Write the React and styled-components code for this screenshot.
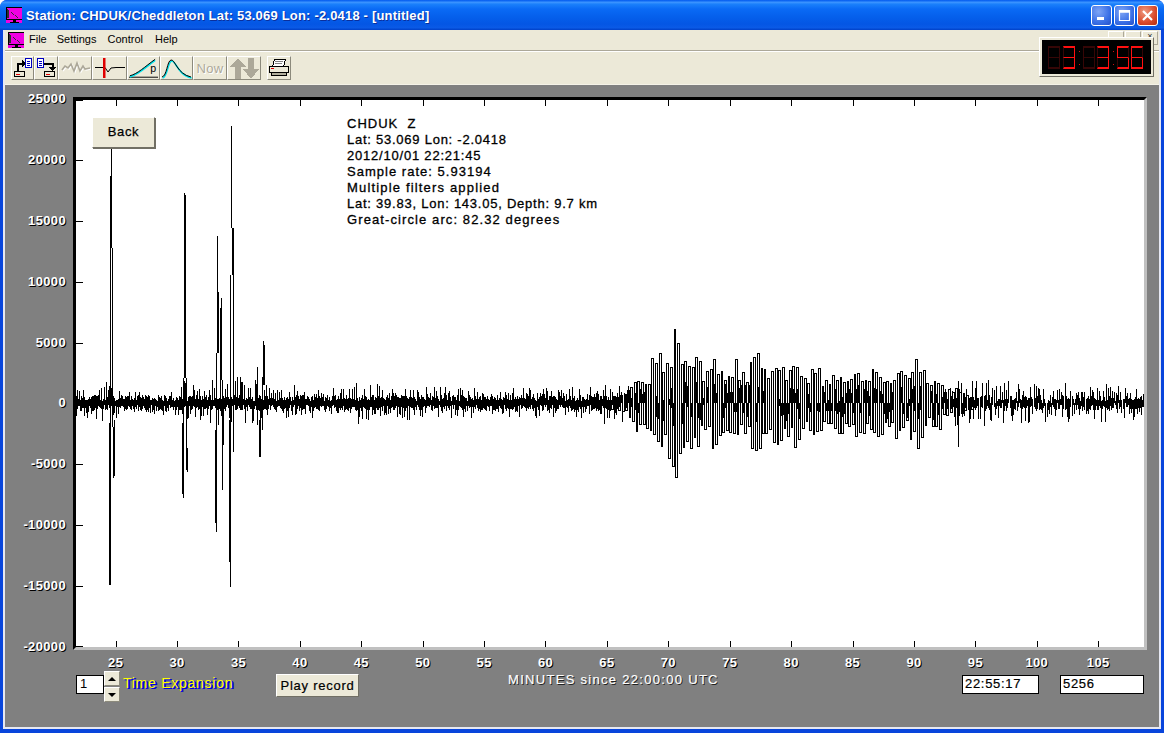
import React from "react";
import styled, { createGlobalStyle } from "styled-components";

const GlobalStyle = createGlobalStyle`
  html, body {
    margin: 0;
    padding: 0;
    background: #fff;
    overflow: hidden;
  }
  * { box-sizing: border-box; }
`;

const Win = styled.div`
  width: 1164px;
  height: 733px;
  display: flex;
  flex-direction: column;
  padding: 0 3px 4px;
  border-radius: 7px 7px 0 0;
  background: #0845dc;
  font-family: "Liberation Sans", Arial, sans-serif;
  position: relative;
`;

const TitleBar = styled.div`
  height: 30px;
  margin: 0 -3px;
  padding: 0 6px 0 6px;
  display: flex;
  align-items: center;
  gap: 4px;
  border-radius: 7px 7px 0 0;
  background: linear-gradient(
    180deg,
    #0058ee 0%,
    #3a93ff 8%,
    #1a80fb 14%,
    #0a6af5 30%,
    #0560ec 55%,
    #0456e4 80%,
    #0a5ae6 92%,
    #0040c8 100%
  );
`;

const TitleText = styled.div`
  flex: 1;
  color: #fff;
  font-size: 13px;
  font-weight: 700;
  letter-spacing: 0.19px;
  text-shadow: 1px 1px 0 #0b2f9c;
  white-space: nowrap;
`;

const WinBtn = styled.div`
  width: 21px;
  height: 21px;
  margin-left: ${(p) => p.$gap || 0}px;
  border: 1px solid #fff;
  border-radius: 3px;
  display: flex;
  align-items: center;
  justify-content: center;
  background: ${(p) =>
    p.$close
      ? "radial-gradient(circle at 35% 30%, #ee9a80, #d9492a 60%, #b52d10)"
      : "radial-gradient(circle at 35% 30%, #7fa5f5, #3a6fe6 60%, #2350c8)"};
`;

const Frame = styled.div`
  flex: 1;
  min-height: 0;
  display: flex;
  flex-direction: column;
  border: solid #e6e8f2;
  border-width: 0 2px 2px 2px;
`;

const MenuBar = styled.div`
  height: 20px;
  display: flex;
  align-items: center;
  padding-left: 3px;
  background: #ece9d8;
`;

const MenuItem = styled.span`
  font-size: 11px;
  line-height: 13px;
  padding-bottom: 2px;
  color: #000;
  margin-left: ${(p) => p.$gap}px;
`;

const MdiGroup = styled.div`
  margin-left: auto;
  margin-right: 1px;
  align-self: flex-start;
  margin-top: 1px;
  display: flex;
  gap: 1px;
`;

const MdiBtn = styled.div`
  width: 16px;
  height: 14px;
  background: #ece9d8;
  border: 1px solid;
  border-color: #fff #aca899 #aca899 #fff;
  font-size: 9px;
  line-height: 9px;
  text-align: center;
  color: #333;
  overflow: hidden;
`;

const Toolbar = styled.div`
  height: 34px;
  display: flex;
  align-items: flex-start;
  padding: 5px 0 0 6px;
  background: #ece9d8;
  border-top: 1px solid #aca899;
  box-shadow: inset 0 1px 0 #fff;
`;

const ToolBtn = styled.div`
  width: ${(p) => p.$w}px;
  height: 24px;
  margin-left: ${(p) => p.$gap || 0}px;
  display: flex;
  align-items: center;
  justify-content: center;
  background: #ece9d8;
  border: 1px solid;
  border-color: #fff #8c8a7c #8c8a7c #fff;
`;

const NowText = styled.span`
  font-size: 13px;
  letter-spacing: 0.3px;
  color: #aca899;
  text-shadow: 1px 1px 0 #fff;
`;

const ClockBox = styled.div`
  position: absolute;
  left: 1039px;
  top: 37px;
  width: 115px;
  height: 40px;
  padding: 2px;
  display: flex;
  background: #ece9d8;
  border: 1px solid;
  border-color: #fff #716f64 #716f64 #fff;
`;

const ClockFace = styled.div`
  flex: 1;
  padding: 6px 0 0 6px;
  display: flex;
  align-items: flex-start;
  background: #000;
`;

const SegDigit = styled.div`
  width: 12px;
  height: 23px;
  margin-right: ${(p) => p.$mr}px;
  display: flex;
  flex-direction: column;
`;

const SegCell = styled.div`
  flex: 1;
  border-style: solid;
  border-width: ${(p) => (p.$lower ? "0 1px 2px 1px" : "2px 1px 1px 1px")};
  border-top-color: ${(p) => (p.$t ? "#ff1010" : "#350606")};
  border-left-color: ${(p) => (p.$l ? "#ff1010" : "#350606")};
  border-right-color: ${(p) => (p.$r ? "#ff1010" : "#350606")};
  border-bottom-color: ${(p) => (p.$b ? "#ff1010" : "#350606")};
`;

const ClockColon = styled.div`
  width: 1px;
  height: 14px;
  margin: 5px 3px 0 1px;
  display: flex;
  flex-direction: column;
  justify-content: space-between;
  &::before,
  &::after {
    content: "";
    height: 1px;
    background: #d01010;
  }
`;

const Workspace = styled.div`
  flex: 1;
  min-height: 0;
  background: #808080;
  padding-top: 12px;
  border-top: 1px solid #f5f3e8;
  overflow: hidden;
`;

const PlotRow = styled.div`
  display: grid;
  grid-template-columns: 68px 1074px;
  grid-template-rows: 553px;
`;

const YAxis = styled.div`
  height: 564px;
  margin-top: -6px;
  padding-right: 7px;
  display: flex;
  flex-direction: column;
  justify-content: space-between;
  align-items: flex-end;
`;

const AxisLabel = styled.span`
  height: 16px;
  line-height: 16px;
  color: #fff;
  font-size: 13px;
  font-weight: 700;
  letter-spacing: 0.35px;
  text-shadow: 1px 1px 0 #000;
`;

const Plot = styled.div`
  position: relative;
  width: 1074px;
  height: 553px;
  background: #fff;
  border-style: solid;
  border-width: 3px;
  border-color: #000 #c0c0c0 #c0c0c0 #000;
`;

const PlotSvg = styled.svg`
  display: block;
`;

const BackBtn = styled.div`
  position: absolute;
  left: 16px;
  top: 17px;
  width: 63px;
  height: 31px;
  display: flex;
  align-items: center;
  justify-content: center;
  padding-bottom: 2px;
  font-size: 13px;
  letter-spacing: 0.6px;
  color: #000;
  -webkit-text-stroke: 0.25px #000;
  background: #ece9d8;
  border: 1px solid;
  border-color: #fff #716f64 #716f64 #fff;
  box-shadow: 1px 1px 0 #716f64;
`;

const Info = styled.div`
  position: absolute;
  left: 271px;
  top: 16px;
  font-size: 13px;
  line-height: 16px;
  color: #000;
  -webkit-text-stroke: 0.3px #000;
  white-space: pre;
`;

const InfoLine = styled.div`
  letter-spacing: ${(p) => p.$ls}px;
`;

const XAxis = styled.div`
  display: flex;
  margin-top: 5px;
  padding-left: 80px;
`;

const XCell = styled.div`
  width: 61.42px;
  display: flex;
  justify-content: center;
`;

const Controls = styled.div`
  display: flex;
  align-items: flex-start;
  padding: 0 15px 0 71px;
`;

const SpinInput = styled.div`
  width: 28px;
  height: 19px;
  margin-top: 4px;
  padding-left: 3px;
  font-size: 13px;
  line-height: 16px;
  background: #fff;
  color: #000;
  border: 1px solid #000;
`;

const SpinCol = styled.div`
  width: 16px;
  display: flex;
  flex-direction: column;
  gap: 1px;
`;

const SpinBtn = styled.div`
  height: 15px;
  display: flex;
  align-items: center;
  justify-content: center;
  background: #ece9d8;
  border: 1px solid;
  border-color: #fff #8c8a7c #8c8a7c #fff;
  &::after {
    content: "";
    border-left: 4px solid transparent;
    border-right: 4px solid transparent;
    ${(p) => (p.$down ? "border-top: 4px solid #000;" : "border-bottom: 4px solid #000;")}
  }
`;

const TimeLabel = styled.div`
  width: 153px;
  margin: 4px 0 0 3px;
  font-size: 14px;
  line-height: 16px;
  letter-spacing: 0.74px;
  color: #ffff00;
  text-shadow: 1px 1px 0 #0000e0, 2px 1px 0 #0000e0;
  white-space: nowrap;
`;

const PlayBtn = styled.div`
  width: 83px;
  height: 23px;
  margin-top: 3px;
  display: flex;
  align-items: center;
  justify-content: center;
  font-size: 13px;
  letter-spacing: 0.75px;
  color: #000;
  -webkit-text-stroke: 0.2px #000;
  white-space: nowrap;
  background: #ece9d8;
  border: 1px solid;
  border-color: #fff #716f64 #716f64 #fff;
`;

const MinutesLabel = styled.div`
  width: 212px;
  margin: 1px 0 0 149px;
  font-size: 13px;
  line-height: 16px;
  letter-spacing: 1.3px;
  color: #fff;
  -webkit-text-stroke: 0.2px #fff;
  text-shadow: 1px 1px 0 #222;
  white-space: nowrap;
`;

const ReadBox = styled.div`
  width: ${(p) => p.$w}px;
  height: 19px;
  margin-top: 4px;
  margin-left: ${(p) => p.$ml};
  padding-left: 2px;
  font-size: 13px;
  line-height: 16px;
  letter-spacing: 0.7px;
  background: #fff;
  color: #000;
  -webkit-text-stroke: 0.2px #000;
  border: 1px solid #000;
`;

// trace sits in page coordinates, the viewBox below maps them into the plot
const envelope = [
  [76, 14], [100, 15], [108, 22], [118, 12], [125, 10], [180, 13], [183, 22], [192, 20],
  [200, 17], [214, 22], [240, 26], [262, 26], [270, 18], [283, 15], [285, 20], [293, 20],
  [297, 13], [350, 15], [358, 22], [370, 18], [400, 17], [480, 13], [560, 15], [600, 15],
  [606, 24], [625, 26], [640, 32], [655, 48], [668, 68], [682, 70], [695, 52], [710, 46],
  [725, 44], [740, 40], [757, 58], [770, 46], [790, 46], [800, 42], [815, 36], [830, 32],
  [850, 42], [880, 38], [895, 36], [912, 52], [920, 52], [935, 32], [958, 34], [975, 28],
  [1000, 24], [1030, 22], [1050, 22], [1100, 21], [1144, 16],
];

const oscKeys = [[76, 0], [600, 0], [640, 1], [800, 1], [930, 0.9], [975, 0.3], [1144, 0.15]];

const spikes = [
  [111, 148, 176], [110, 176, 248], [111, 176, 248], [110, 248, 423], [112, 248, 427],
  [109, 423, 585], [110, 423, 585], [113, 427, 478], [114, 420, 476],
  [184, 193, 378], [185, 195, 378], [183, 378, 498], [182, 423, 494], [186, 378, 448],
  [187, 448, 472], [186, 448, 470],
  [217, 236, 292], [217, 292, 353], [218, 292, 353], [216, 353, 532], [215, 430, 523],
  [220, 308, 400], [221, 298, 380], [222, 380, 490], [223, 400, 445],
  [231, 126, 228], [232, 228, 275], [233, 228, 275], [230, 275, 420], [233, 275, 452],
  [229, 420, 562], [230, 420, 587],
  [263, 341, 385], [264, 345, 385], [257, 367, 425], [259, 420, 457], [260, 420, 457],
  [262, 385, 430], [958, 395, 447],
];

function interp(keys, x) {
  for (let i = 1; i < keys.length; i++) {
    if (x <= keys[i][0]) {
      const [x0, v0] = keys[i - 1];
      const [x1, v1] = keys[i];
      return v0 + ((v1 - v0) * (x - x0)) / (x1 - x0);
    }
  }
  return keys[keys.length - 1][1];
}

function buildTrace() {
  let seed = 20121001;
  const rnd = () => {
    seed = (seed * 1664525 + 1013904223) % 4294967296;
    return seed / 4294967296;
  };
  let d = "";

  // dense core of the background noise, thins out where the surface waves take over
  for (let x = 76; x < 1144; x++) {
    const osc = interp(oscKeys, x);
    if (rnd() < osc * 0.85) continue;
    const up = 2 + rnd() * 6;
    const down = 2 + rnd() * 6;
    d += `M${x + 0.5} ${Math.round(403 - up)}V${Math.round(403 + down)}`;
  }

  // thin excursions above and below the core
  let x = 76;
  while (x < 1144) {
    const osc = interp(oscKeys, x);
    const amp = interp(envelope, x) * (1 - 0.6 * osc);
    const mag = amp * (0.55 + 0.55 * Math.pow(rnd(), 1.5));
    const sign = rnd() < 0.5 ? -1 : 1;
    d += `M${Math.round(x) + 0.5} 403V${Math.round(403 + sign * mag)}`;
    x += 1 + rnd() * 1.5;
  }

  // surface waves: alternating bars joined at the peaks, with a slow beat
  let sign = 1;
  x = 604;
  d += "M604.5 403";
  while (x < 975) {
    const osc = interp(oscKeys, x);
    const amp = interp(envelope, x);
    const beat = 0.8 + 0.16 * Math.sin(x * 0.31) + 0.1 * Math.sin(x * 0.83 + 1);
    const mag = amp * osc * beat * (0.68 + 0.38 * rnd());
    d += `H${Math.round(x) + 0.5}V${Math.round(403 + sign * mag)}`;
    sign = -sign;
    x += 1.6 + rnd() * 0.4;
  }

  spikes.forEach(([sx, y1, y2]) => {
    d += `M${sx + 0.5} ${y1}V${y2}`;
  });
  return d;
}

const tracePath = buildTrace();

const yTicks = [160, 221, 282, 343, 403, 464, 525, 586];
const xTicks = [25, 30, 35, 40, 45, 50, 55, 60, 65, 70, 75, 80, 85, 90, 95, 100, 105];
const tickX = (m) => Math.round(115.5 + (m - 25) * 12.285);

function Seismogram() {
  return (
    <PlotSvg width="1068" height="547" viewBox="76 100 1068 547" shapeRendering="crispEdges">
      <path d={tracePath} fill="none" stroke="#000" strokeWidth="1" />
      {yTicks.map((y) => (
        <line key={y} x1="76" x2="83" y1={y} y2={y} stroke="#000" />
      ))}
      <line x1="76" x2="83" y1="100.5" y2="100.5" stroke="#000" />
      <line x1="76" x2="83" y1="646.5" y2="646.5" stroke="#000" />
      {xTicks.map((m) => (
        <g key={m}>
          <line x1={tickX(m) + 0.5} x2={tickX(m) + 0.5} y1="100" y2="106" stroke="#000" />
          <line x1={tickX(m) + 0.5} x2={tickX(m) + 0.5} y1="641" y2="647" stroke="#000" />
        </g>
      ))}
    </PlotSvg>
  );
}

function AppIcon() {
  return (
    <svg width="16" height="16" viewBox="0 0 16 16" shapeRendering="crispEdges">
      <rect width="16" height="16" fill="#f000e0" />
      <path d="M0 .5H16M.5 0V13" stroke="#000" />
      <path d="M1 2L13 11H1z" fill="#303030" />
      <path d="M3 4L11 10.5H3z" fill="#f000e0" />
      <path d="M0 12.5H16M7 13h2v2h3v1H4v-1h3z" stroke="#000" strokeWidth="1" fill="#000" />
    </svg>
  );
}

function DriveGlyph({ x }) {
  return (
    <g>
      <rect x={x + 0.5} y="14.5" width="10" height="5" fill="#ece9d8" stroke="#000" />
      <path d={`M${x + 2} 17.5h4`} stroke="#e00000" />
    </g>
  );
}

function DocGlyph({ x }) {
  return (
    <g>
      <rect x={x + 0.5} y="1.5" width="6" height="9" fill="#fff" stroke="#0000c0" />
      <path d={`M${x + 2} 4.5h3M${x + 2} 6.5h3M${x + 2} 8.5h3`} stroke="#0000c0" />
    </g>
  );
}

function OpenIcon() {
  return (
    <svg width="21" height="22" viewBox="0 0 21 22" shapeRendering="crispEdges">
      <DocGlyph x={13} />
      <DriveGlyph x={2} />
      <path d="M5.5 14V6.5H10" fill="none" stroke="#000" strokeWidth="2" />
      <path d="M10 3h1v1h1v1h1v3h-1v1h-1v1h-1z" fill="#000" />
    </svg>
  );
}

function SaveIcon() {
  return (
    <svg width="22" height="22" viewBox="0 0 22 22" shapeRendering="crispEdges">
      <DocGlyph x={2} />
      <DriveGlyph x={9} />
      <path d="M9 6.5H17.5V11" fill="none" stroke="#000" strokeWidth="2" />
      <path d="M14 10h7v1h-1v1h-1v1h-1v1h-1v-1h-1v-1h-1v-1h-1z" fill="#000" />
    </svg>
  );
}

function WaveOffIcon() {
  const pts = "2,13 5,9 8,11 11,7 14,14 17,6 20,14 23,9 25,12 30,11";
  return (
    <svg width="31" height="22" viewBox="0 0 31 22">
      <polyline points={pts} transform="translate(1 1)" fill="none" stroke="#fff" strokeWidth="1.4" />
      <polyline points={pts} fill="none" stroke="#aca899" strokeWidth="1.6" />
    </svg>
  );
}

function PickIcon() {
  return (
    <svg width="32" height="22" viewBox="0 0 32 22">
      <polyline points="1,10.5 11,10.5 14,15 17,11 22,10.5 31,10.5" fill="none" stroke="#000" strokeWidth="1" />
      <rect x="9" y="1" width="2.5" height="20" fill="#e00000" />
    </svg>
  );
}

function SlopeIcon() {
  return (
    <svg width="32" height="22" viewBox="0 0 32 22">
      <path d="M1 20.5H31" stroke="#000" strokeWidth="1" fill="none" />
      <path d="M2 20C10 18 17 11 28 3" fill="none" stroke="#00e0e8" strokeWidth="2" />
      <path d="M2 19C10 17 17 10 28 2" fill="none" stroke="#000" strokeWidth="1" />
      <text x="23" y="15" fontSize="11" fontFamily="Liberation Sans, sans-serif" fill="#000">p</text>
    </svg>
  );
}

function BellIcon() {
  return (
    <svg width="31" height="22" viewBox="0 0 31 22">
      <path d="M1 20C6 19 6 4 10 3C14 2 16 17 30 20" fill="none" stroke="#00e0e8" strokeWidth="1.6" transform="translate(0.6 1)" />
      <path d="M1 20C6 19 6 4 10 3C14 2 16 17 30 20" fill="none" stroke="#000" strokeWidth="1" />
    </svg>
  );
}

function ArrowsIcon() {
  return (
    <svg width="32" height="22" viewBox="0 0 32 22" shapeRendering="crispEdges">
      <path d="M9 1L17 10H12V22H6V10H1z" fill="#aca899" transform="translate(1 0)" />
      <path d="M19 0h6v11h5l-8 10-8-10h5z" fill="#aca899" transform="translate(1 1)" />
    </svg>
  );
}

function PrinterIcon() {
  return (
    <svg width="22" height="20" viewBox="0 0 22 20" shapeRendering="crispEdges">
      <path d="M6.5 1.5h11l-2 7h-11z" fill="#fff" stroke="#000" />
      <path d="M7 3.5h8M7 5.5h7" stroke="#808080" />
      <rect x="1.5" y="8.5" width="19" height="6" fill="#ece9d8" stroke="#000" />
      <rect x="3" y="10" width="3" height="1" fill="#e00000" />
      <rect x="3.5" y="14.5" width="15" height="3" fill="#b0ad9c" stroke="#000" />
    </svg>
  );
}

// t/tl/tr/m/bl/br/b segments, CSS borders on two stacked cells
const SEGMENTS = {
  off: {},
  3: { t: 1, tr: 1, m: 1, br: 1, b: 1 },
  5: { t: 1, tl: 1, m: 1, br: 1, b: 1 },
  6: { t: 1, tl: 1, m: 1, bl: 1, br: 1, b: 1 },
};

function Digit({ value, mr }) {
  const s = SEGMENTS[value];
  return (
    <SegDigit $mr={mr}>
      <SegCell $t={s.t} $l={s.tl} $r={s.tr} $b={s.m} />
      <SegCell $lower $l={s.bl} $r={s.br} $b={s.b} />
    </SegDigit>
  );
}

function Clock() {
  return (
    <ClockBox aria-label="13:13:56">
      <ClockFace>
        <Digit value="off" mr={3} />
        <Digit value="3" mr={3} />
        <ClockColon />
        <Digit value="off" mr={2} />
        <Digit value="3" mr={3} />
        <ClockColon />
        <Digit value="5" mr={2} />
        <Digit value="6" mr={0} />
      </ClockFace>
    </ClockBox>
  );
}

const yLabels = ["25000", "20000", "15000", "10000", "5000", "0", "-5000", "-10000", "-15000", "-20000"];

const infoLines = [
  ["CHDUK  Z", 1],
  ["Lat: 53.069 Lon: -2.0418", 0.75],
  ["2012/10/01 22:21:45", 0.79],
  ["Sample rate: 5.93194", 1.02],
  ["Multiple filters applied", 1.17],
  ["Lat: 39.83, Lon: 143.05, Depth: 9.7 km", 0.76],
  ["Great-circle arc: 82.32 degrees", 1.1],
];

export default function App() {
  return (
    <>
      <GlobalStyle />
      <Win>
        <TitleBar>
          <AppIcon />
          <TitleText>Station: CHDUK/Cheddleton Lat: 53.069 Lon: -2.0418 - [untitled]</TitleText>
          <WinBtn>
            <svg width="13" height="13" viewBox="0 0 13 13"><rect x="2" y="8" width="7" height="3" fill="#fff" /></svg>
          </WinBtn>
          <WinBtn $gap={-2}>
            <svg width="13" height="13" viewBox="0 0 13 13"><path d="M1.5 1.5h10v10h-10z M1.5 3h10" fill="none" stroke="#fff" strokeWidth="1.2" /><rect x="1" y="1" width="11" height="2.5" fill="#fff" /></svg>
          </WinBtn>
          <WinBtn $close $gap={-2}>
            <svg width="13" height="13" viewBox="0 0 13 13"><path d="M2 2L11 11M11 2L2 11" stroke="#fff" strokeWidth="2.2" /></svg>
          </WinBtn>
        </TitleBar>
        <Frame>
          <MenuBar>
            <AppIcon />
            <MenuItem $gap={5}>File</MenuItem>
            <MenuItem $gap={10}>Settings</MenuItem>
            <MenuItem $gap={11}>Control</MenuItem>
            <MenuItem $gap={12}>Help</MenuItem>
            <MdiGroup>
              <MdiBtn />
              <MdiBtn>_</MdiBtn>
              <MdiBtn>×</MdiBtn>
            </MdiGroup>
          </MenuBar>
          <Toolbar>
            <ToolBtn $w={23}><OpenIcon /></ToolBtn>
            <ToolBtn $w={24}><SaveIcon /></ToolBtn>
            <ToolBtn $w={34}><WaveOffIcon /></ToolBtn>
            <ToolBtn $w={35}><PickIcon /></ToolBtn>
            <ToolBtn $w={33}><SlopeIcon /></ToolBtn>
            <ToolBtn $w={33}><BellIcon /></ToolBtn>
            <ToolBtn $w={34}><NowText>Now</NowText></ToolBtn>
            <ToolBtn $w={34}><ArrowsIcon /></ToolBtn>
            <ToolBtn $w={24} $gap={6}><PrinterIcon /></ToolBtn>
          </Toolbar>
          <Workspace>
            <PlotRow>
              <YAxis>
                {yLabels.map((l) => (
                  <AxisLabel key={l}>{l}</AxisLabel>
                ))}
              </YAxis>
              <Plot>
                <Seismogram />
                <BackBtn>Back</BackBtn>
                <Info>
                  {infoLines.map(([text, ls]) => (
                    <InfoLine key={text} $ls={ls}>{text}</InfoLine>
                  ))}
                </Info>
              </Plot>
            </PlotRow>
            <XAxis>
              {xTicks.map((m) => (
                <XCell key={m}>
                  <AxisLabel>{m}</AxisLabel>
                </XCell>
              ))}
            </XAxis>
            <Controls>
              <SpinInput>1</SpinInput>
              <SpinCol>
                <SpinBtn />
                <SpinBtn $down />
              </SpinCol>
              <TimeLabel>Time Expansion</TimeLabel>
              <PlayBtn>Play record</PlayBtn>
              <MinutesLabel>MINUTES since 22:00:00 UTC</MinutesLabel>
              <ReadBox $w={77} $ml="auto">22:55:17</ReadBox>
              <ReadBox $w={84} $ml="21px">5256</ReadBox>
            </Controls>
          </Workspace>
        </Frame>
        <Clock />
      </Win>
    </>
  );
}
